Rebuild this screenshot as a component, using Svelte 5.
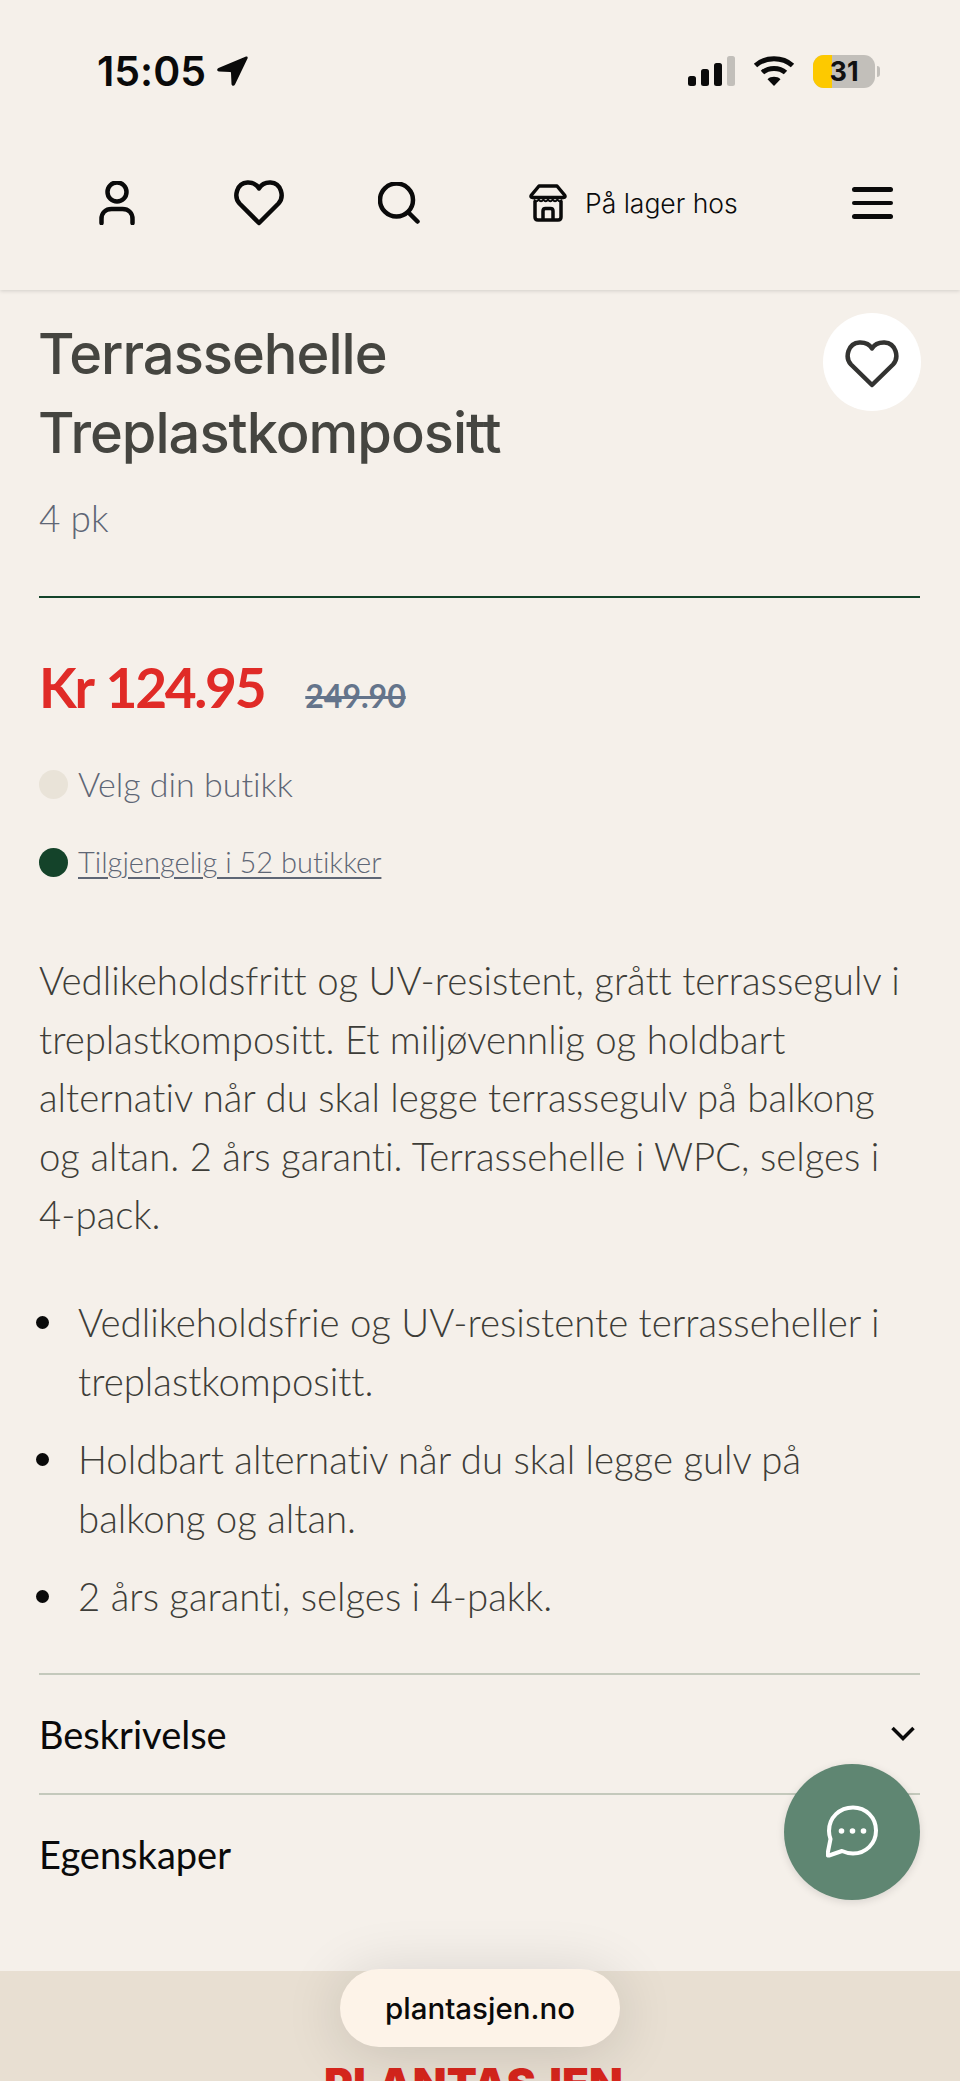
<script>
	const bullets = [
		'Vedlikeholdsfrie og UV-resistente terrasseheller i treplastkompositt.',
		'Holdbart alternativ når du skal legge gulv på balkong og altan.',
		'2 års garanti, selges i 4-pakk.'
	];
</script>

<div class="page">
	<header>
		<div class="status">
			<div class="time">
				<span>15:05</span>
				<svg width="32" height="32" viewBox="0 0 32 32"><path d="M30 1.500 2.500 13c-2 1-1.500 3.500.5 3.500L14 17c.6 0 1 .4 1 1l.5 11c.1 2 2.500 2.500 3.500.6L31.500 3.500c.6-1.300-.3-2.500-1.500-2Z" fill="#0a0a0a" /></svg>
			</div>
			<div class="indicators">
				<svg width="48" height="32" viewBox="0 0 48 32">
					<rect x="1" y="21" width="8" height="10" rx="2.500" fill="#0a0a0a" />
					<rect x="14" y="14" width="8" height="17" rx="2.500" fill="#0a0a0a" />
					<rect x="27" y="8" width="8" height="23" rx="2.500" fill="#0a0a0a" />
					<rect x="40" y="1" width="8" height="30" rx="2.500" fill="#c2bfba" />
				</svg>
				<svg class="wifi" width="42" height="32" viewBox="0 0 42 32" fill="none" stroke="#0a0a0a" stroke-width="5">
					<path d="M2.500 10.500C12.500 1.500 29.500 1.500 39.500 10.500" />
					<path d="M9.500 17.500C15.500 12 26.500 12 32.500 17.500" />
					<path d="M21 31 14.500 24.200C18 21 24 21 27.500 24.200Z" fill="#0a0a0a" stroke="none" />
				</svg>
				<div class="battery">
					<div class="cell"><span class="charge"></span><span class="level">31</span></div>
					<span class="nub"></span>
				</div>
			</div>
		</div>
		<nav>
			<svg width="36" height="44" viewBox="0 0 36 44" fill="none" stroke="#0a0a0a" stroke-width="4.500" stroke-linecap="round">
				<circle cx="18" cy="11" r="9.500" />
				<path d="M2.500 42v-4c0-6 4-10 10-10h11c6 0 10 4 10 10v4" />
			</svg>
			<svg width="50" height="46" viewBox="0 0 50 46" fill="none" stroke="#0a0a0a" stroke-width="4.500" stroke-linejoin="round">
				<path d="M25 43 5.500 23.500C-.5 17 2.500 3 13.500 2.500 19 2.300 23 5 25 8.500 27 5 31 2.300 36.500 2.500 47.500 3 50.500 17 44.500 23.500Z" />
			</svg>
			<svg width="42" height="42" viewBox="0 0 42 42" fill="none" stroke="#0a0a0a" stroke-width="4.500" stroke-linecap="round">
				<circle cx="18.500" cy="18" r="16.500" />
				<path d="M31 31l8.500 8.500" />
			</svg>
			<div class="stock">
				<svg width="38" height="38" viewBox="0 0 38 38" fill="none" stroke="#0a0a0a" stroke-width="3.500" stroke-linejoin="round">
					<path d="M6 17v16c0 1.800 1.200 3 3 3h20c1.800 0 3-1.200 3-3V17" />
					<path d="M10 2h18l7.500 9c1 1.500.5 2.500-1 2.500H3.500c-1.500 0-2-1-1-2.500Z" />
					<path d="M5 15.500q2.300 3.500 4.700 0 2.300 3.500 4.700 0 2.300 3.500 4.600 0 2.300 3.500 4.700 0 2.300 3.500 4.700 0 2.300 3.500 4.600 0" stroke-width="2" />
					<path d="M14 36V27c0-1.500 1-2.500 2.500-2.500h5c1.500 0 2.500 1 2.500 2.500v9" />
				</svg>
				<span>På lager hos</span>
			</div>
			<div class="burger"><span></span><span></span><span></span></div>
		</nav>
	</header>

	<main>
		<div class="title-row">
			<h1>Terrassehelle<br />Treplastkompositt</h1>
			<button class="fav" aria-label="Favoritt">
				<svg width="54" height="48" viewBox="0 0 54 48" fill="none" stroke="#333331" stroke-width="4.500" stroke-linejoin="round">
					<path d="M27 45 6 24.500C-.5 17.500 3 3 14.500 2.500 20.500 2.300 25 5 27 8.500 29 5 33.500 2.300 39.500 2.500 51 3 54.500 17.500 48 24.500Z" />
				</svg>
			</button>
		</div>
		<p class="pack">4 pk</p>
		<hr />
		<div class="prices">
			<span class="price">Kr 124.95</span>
			<s class="old">249.90</s>
		</div>
		<div class="avail first"><span class="dot light"></span><span>Velg din butikk</span></div>
		<div class="avail second"><span class="dot dark"></span><span class="link">Tilgjengelig i 52 butikker</span></div>
		<p class="lead">
			Vedlikeholdsfritt og UV-resistent, grått terrassegulv i treplastkompositt. Et miljøvennlig og
			holdbart alternativ når du skal legge terrassegulv på balkong og altan. 2 års garanti.
			Terrassehelle i WPC, selges i 4-pack.
		</p>
		<ul>
			{#each bullets as item}
				<li>{item}</li>
			{/each}
		</ul>
		<div class="accordion">
			<div class="acc-row">
				<span>Beskrivelse</span>
				<svg width="24" height="15" viewBox="0 0 24 15" fill="none" stroke="#0a0a0a" stroke-width="3.500"><path d="M1.500 2 12 12.500 22.500 2" /></svg>
			</div>
			<div class="acc-row"><span>Egenskaper</span></div>
		</div>
	</main>

	<footer>
		<div class="logo">PLANTASJEN</div>
	</footer>

	<button class="chat" aria-label="Chat">
		<svg width="52" height="54" viewBox="0 0 52 54" fill="none">
			<path d="M27 2.500C13.500 2.500 3 12.500 3 26c0 3 .6 5.500 1.500 8L1.500 49c-.3 1 .5 1.800 1.500 1.500l13-4.500c3.300 1.500 7 2.500 11 2.500 13 0 23-10 23-23S40 2.500 27 2.500Z" stroke="#fff" stroke-width="4" stroke-linejoin="round" />
			<circle cx="15.500" cy="26" r="2.800" fill="#fff" />
			<circle cx="26.500" cy="26" r="2.800" fill="#fff" />
			<circle cx="37.500" cy="26" r="2.800" fill="#fff" />
		</svg>
	</button>
	<div class="url">plantasjen.no</div>
</div>

<style>
	:global(body) {
		margin: 0;
		background: #f5f0ea;
	}

	.page {
		position: relative;
		height: 2081px;
		overflow: hidden;
		background: #f5f0ea;
		font-family: 'Lato', 'Liberation Sans', sans-serif;
		font-variant-ligatures: none;
		color: #3d3d38;
	}

	header {
		height: 290px;
		box-sizing: border-box;
		padding-top: 54px;
		box-shadow: 0 1px 4px rgba(0, 0, 0, 0.14);
		background: #f5f0ea;
		position: relative;
	}

	.status {
		display: flex;
		justify-content: space-between;
		align-items: center;
		height: 34px;
		padding: 0 80px 0 97px;
	}

	.time {
		display: flex;
		align-items: center;
		gap: 10px;
		font-family: 'Inter', sans-serif;
		font-size: 41px;
		font-weight: 600;
		color: #0a0a0a;
	}

	.indicators {
		display: flex;
		align-items: center;
		gap: 18px;
	}

	.battery {
		display: flex;
		align-items: center;
		gap: 2px;
	}

	.cell {
		position: relative;
		width: 62px;
		height: 33px;
		border-radius: 11px;
		overflow: hidden;
		background: #c2bfba;
	}

	.charge {
		position: absolute;
		left: 0;
		top: 0;
		bottom: 0;
		width: 19px;
		background: #fdc900;
	}

	.level {
		position: absolute;
		inset: 0;
		text-align: center;
		font-family: 'Inter', sans-serif;
		font-size: 27px;
		font-weight: 700;
		line-height: 33px;
		color: #111;
	}

	.nub {
		width: 3px;
		height: 11px;
		border-radius: 0 3px 3px 0;
		background: #c2bfba;
	}

	nav {
		display: grid;
		grid-template-columns: 135px 144px 151px 323px auto;
		align-items: center;
		margin-top: 92px;
		padding-left: 99px;
	}

	.stock {
		display: flex;
		align-items: center;
		gap: 18px;
		font-family: 'Inter', sans-serif;
		font-size: 26.500px;
		font-weight: 300;
		color: #0a0a0a;
	}

	.burger {
		display: flex;
		flex-direction: column;
		gap: 9px;
		width: 41px;
	}

	.burger span {
		height: 4.500px;
		border-radius: 3px;
		background: #0a0a0a;
	}

	main {
		padding: 25px 40px 0 39px;
	}

	.title-row {
		display: flex;
		justify-content: space-between;
		align-items: flex-start;
	}

	h1 {
		margin: 0 0 0 -1px;
		font-size: 56px;
		line-height: 79px;
		font-weight: 500;
		letter-spacing: -1px;
		color: #454540;
		font-family: 'Inter', sans-serif;
	}

	.fav {
		width: 98px;
		height: 98px;
		margin: -2px -1px 0 0;
		padding: 4px 0 0;
		border: none;
		border-radius: 50%;
		background: #fff;
		display: flex;
		align-items: center;
		justify-content: center;
	}

	.pack {
		margin: 20px 0 0;
		font-size: 37px;
		line-height: 50px;
		font-weight: 300;
		color: #5e6675;
	}

	hr {
		margin: 53px 0 0;
		border: none;
		height: 2px;
		background: #14432a;
	}

	.prices {
		display: flex;
		align-items: baseline;
		gap: 41px;
		margin-top: 54px;
	}

	.price {
		font-size: 55px;
		line-height: 70px;
		font-weight: 700;
		letter-spacing: -2.300px;
		word-spacing: 3px;
		color: #e02b27;
	}

	.old {
		font-size: 32px;
		font-weight: 700;
		color: #64748b;
	}

	.avail {
		display: flex;
		align-items: center;
		gap: 10px;
		color: #5e6675;
	}

	.avail.first {
		margin-top: 37px;
		font-size: 34px;
		line-height: 50px;
		font-weight: 300;
	}

	.avail.second {
		margin-top: 28px;
		font-size: 29px;
		line-height: 50px;
		font-weight: 300;
	}

	.link {
		text-decoration: underline;
		text-underline-offset: 4px;
	}

	.dot {
		width: 29px;
		height: 29px;
		border-radius: 50%;
		flex: none;
	}

	.dot.light {
		background: #e9e3d8;
	}

	.dot.dark {
		background: #14432a;
	}

	.lead {
		margin: 64px 0 0;
		font-size: 38.400px;
		line-height: 58.600px;
		font-weight: 300;
	}

	ul {
		margin: 49px 0 0;
		padding: 0 0 0 39px;
		list-style: none;
		font-size: 38.400px;
		line-height: 58.600px;
		font-weight: 300;
	}

	li {
		position: relative;
	}

	li + li {
		margin-top: 20px;
	}

	li::before {
		content: '';
		position: absolute;
		left: -42px;
		top: 23px;
		width: 13px;
		height: 13px;
		border-radius: 50%;
		background: #0a0a0a;
	}

	.accordion {
		margin-top: 47px;
		color: #0a0a0a;
		font-size: 38px;
		font-weight: 400;
	}

	.acc-row {
		display: flex;
		justify-content: space-between;
		align-items: center;
		height: 118px;
		border-top: 2px solid #c4c9bc;
	}

	.acc-row svg {
		margin-right: 5px;
	}

	footer {
		position: absolute;
		left: 0;
		right: 0;
		top: 1971px;
		bottom: 0;
		background: #e8dfd2;
		text-align: center;
	}

	.logo {
		margin-top: 83px;
		padding-right: 13px;
		font-family: 'Inter', sans-serif;
		font-size: 44px;
		font-weight: 900;
		color: #d7261c;
		line-height: 60px;
	}

	.chat {
		position: absolute;
		left: 784px;
		top: 1764px;
		width: 136px;
		height: 136px;
		border: none;
		padding: 0;
		border-radius: 50%;
		background: #5f8672;
		box-shadow: 0 2px 8px rgba(0, 0, 0, 0.12);
		display: flex;
		align-items: center;
		justify-content: center;
	}

	.url {
		position: absolute;
		left: 340px;
		top: 1969px;
		width: 280px;
		height: 78px;
		border-radius: 39px;
		background: #fdf3e8;
		box-shadow: 0 6px 60px rgba(0, 0, 0, 0.14);
		font-family: 'Inter', sans-serif;
		font-size: 29.500px;
		font-weight: 500;
		line-height: 78px;
		text-align: center;
		color: #0a0a0a;
	}
</style>
